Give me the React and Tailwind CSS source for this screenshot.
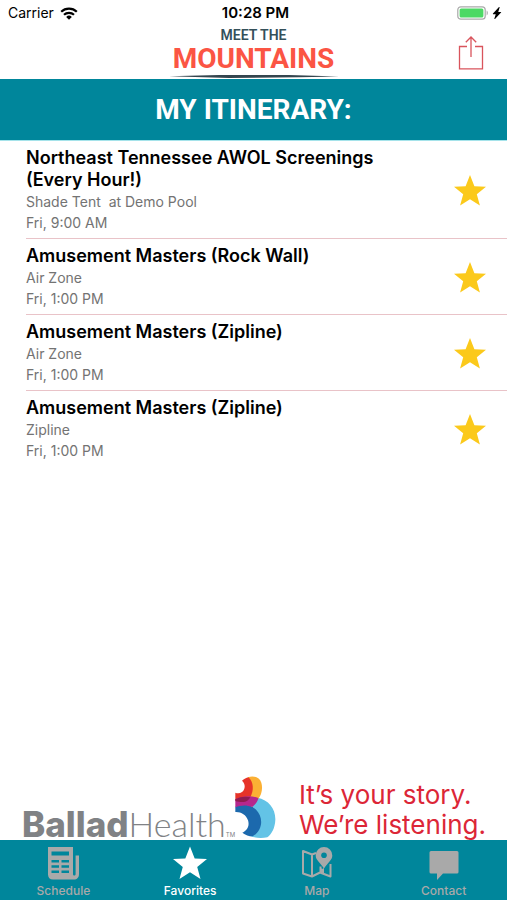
import React, { useState } from 'react'
import { BsLightningChargeFill } from 'react-icons/bs'

const EVENTS = [
  { id: 1, title: 'Northeast Tennessee AWOL Screenings (Every Hour!)', place: 'Shade Tent \u00a0at Demo Pool', time: 'Fri, 9:00 AM' },
  { id: 2, title: 'Amusement Masters (Rock Wall)', place: 'Air Zone', time: 'Fri, 1:00 PM' },
  { id: 3, title: 'Amusement Masters (Zipline)', place: 'Air Zone', time: 'Fri, 1:00 PM' },
  { id: 4, title: 'Amusement Masters (Zipline)', place: 'Zipline', time: 'Fri, 1:00 PM' },
]

const Star = ({ className }) => (
  <svg viewBox="0 0 32 31" className={className} fill="currentColor" aria-hidden="true">
    <path d="M16 0l4.400 11.200 11.600.600-9.200 7.400 3.100 11.400L16 24.300 6.100 30.600l3.100-11.400L0 11.800l11.600-.600z" />
  </svg>
)

const WifiIcon = () => (
  <svg viewBox="0 0 18 13" className="w-[18px] h-[13px]" fill="none" stroke="#000" strokeWidth="2.2" aria-hidden="true">
    <path d="M1.200 4.800a11.200 11.200 0 0 1 15.600 0" />
    <path d="M4 7.800a7.200 7.200 0 0 1 10 0" />
    <path d="M9 12.800L6.200 9.900a4 4 0 0 1 5.600 0z" fill="#000" stroke="none" />
  </svg>
)

const BatteryIcon = () => (
  <svg viewBox="0 0 32 14" className="w-8 h-[14px]" aria-hidden="true">
    <rect x=".8" y=".8" width="27.4" height="12.4" rx="3" fill="#fff" stroke="#a9a9a9" strokeWidth="1.2" />
    <rect x="2.6" y="2.4" width="23.8" height="9.2" rx="1.6" fill="#4cd964" />
    <path d="M29.600 4.600c1.600.600 1.600 4.200 0 4.800z" fill="#a9a9a9" />
  </svg>
)

const ShareIcon = () => (
  <svg viewBox="0 0 26 34" className="w-[26px] h-[34px]" fill="none" stroke="#d9545c" strokeWidth="1.3" aria-hidden="true">
    <path d="M9 10.500H1.500v22.300h23V10.500H17" />
    <path d="M13 21V1.200M7.800 6.200L13 1l5.200 5.200" />
  </svg>
)

const NewsIcon = () => (
  <svg viewBox="0 0 32 34" className="w-8 h-[34px]" aria-hidden="true">
    <path d="M1 1h25v27c0 2 2.600 2 2.600 0V9.500H32V28c0 3.600-2 5.500-5 5.500H6c-3.200 0-5-2-5-5z" fill="currentColor" />
    <path d="M4.500 5.500h17.500v4H4.500zM4.500 14h7.500v2.600H4.500zM14.500 14H22v2.600h-7.500zM4.500 19.200h7.500v2.600H4.500zM14.500 19.200H22v2.600h-7.500zM4.500 24.400h7.500V27H4.500zM14.500 24.400H22V27h-7.500z" fill="#00869b" />
  </svg>
)

const MapIcon = () => (
  <svg viewBox="0 0 32 34" className="w-8 h-[34px]" fill="none" stroke="currentColor" strokeWidth="2" strokeLinejoin="round" aria-hidden="true">
    <path d="M2 5l9 3.500v22L2 27.500zM11 8.500l4-1.500M11 30.500l8-4 10.500 4V18M19.500 26.500v-6" />
    <path d="M19 27v-6l2 2 2-1v5z" fill="currentColor" stroke="none" />
    <path d="M23 1a8.300 8.300 0 0 1 8.300 8.400c0 4.600-4.600 7.200-8.300 13-3.700-5.800-8.300-8.400-8.300-13A8.300 8.300 0 0 1 23 1z" fill="currentColor" stroke="none" />
    <circle cx="23" cy="9.200" r="2.8" fill="#00869b" stroke="none" />
  </svg>
)

const ContactIcon = () => (
  <svg viewBox="0 0 32 34" className="w-8 h-[34px]" fill="currentColor" aria-hidden="true">
    <path d="M3 5h26q1.500 0 1.500 1.500V26q0 1.500-1.500 1.500H15L9 34v-6.500H3q-1.500 0-1.500-1.500V6.500Q1.500 5 3 5z" />
  </svg>
)

const FavoritesIcon = () => <Star className="w-[34px] h-[34px]" />

const TABS = [
  { label: 'Schedule', Icon: NewsIcon },
  { label: 'Favorites', Icon: FavoritesIcon },
  { label: 'Map', Icon: MapIcon },
  { label: 'Contact', Icon: ContactIcon },
]

const BalladMark = () => (
  <svg viewBox="695 32 123 186" className="w-[41px] h-[62px]" aria-hidden="true">
    {/* light blue and yellow outer lobes */}
    <path d="M762 97c34 6 55 34 54 66-1 24-10 42-24 53-18 3-38 2-52-4 32-20 36-62 6-90z" fill="#63c3e6" />
    <path d="M733 36c20-7 36 1 41 16 5 17 1 36-10 50l-30-4c16-18 14-43-1-62z" fill="#fbb034" />
    {/* red and dark blue inner lobes */}
    <path d="M716 46c6-5 13-9 19-10 16 13 18 40 5 61-15-3-30-1-44 7V82c7 3 14 2 20-2 11-8 11-25 0-34z" fill="#e63329" />
    <path d="M696 124c20-9 46-7 61 8 26 26 20 64-9 81-11 0-22-4-31-11 16-7 22-22 17-37-6-17-21-26-38-25z" fill="#1c69ad" />
    {/* overlap */}
    <path d="M696 102c19-10 47-12 69-4-2 11-8 19-18 27-17-7-35-6-51 1z" fill="#b5278d" />
    <path d="M696 102c14-8 30-9 45-6-4 8-11 13-19 14-9 1-18-1-26-3z" fill="#8f1c50" />
  </svg>
)

const App = () => {
  const [removed, setRemoved] = useState([])
  const [activeTab, setActiveTab] = useState('Favorites')

  const toggle = (id) => {
    setRemoved(removed.includes(id) ? removed.filter((x) => x !== id) : [...removed, id])
  }

  return (
    <div className="min-h-screen flex flex-col bg-white text-black font-['Inter',sans-serif]">
      {/* Status bar */}
      <div className="grid grid-cols-[1fr_auto_1fr] items-center h-[26px] pl-2 pr-1 text-sm">
        <div className="flex items-center gap-1.5">
          <span>Carrier</span>
          <WifiIcon />
        </div>
        <div className="text-[15px] leading-5 font-semibold">10:28 PM</div>
        <div className="flex items-center justify-end gap-0.5">
          <BatteryIcon />
          <BsLightningChargeFill className="w-3 h-3" />
        </div>
      </div>

      {/* Header */}
      <header className="grid grid-cols-[1fr_auto_1fr] items-center h-[53px]">
        <div />
        <div className="flex flex-col items-center font-['Roboto',sans-serif]">
          <span className="text-sm leading-4 font-semibold text-[#34505a]">MEET THE</span>
          <span className="text-[28px] leading-8 font-bold text-[#fb5544]">MOUNTAINS</span>
          <svg viewBox="0 0 170 3" className="w-[170px] h-[3px]" aria-hidden="true">
            <path d="M0 1.200l50-1.100h70L170 1.500l-40 .800-70 .600z" fill="#34454e" />
          </svg>
        </div>
        <button type="button" aria-label="Share" className="justify-self-end mr-[23px]">
          <ShareIcon />
        </button>
      </header>

      <div className="flex items-center justify-center h-[62px] bg-[#00869b] border-b border-[#a5e3ea]">
        <h1 className="text-[28px] leading-8 font-bold text-white font-['Roboto',sans-serif]">MY ITINERARY:</h1>
      </div>

      {/* Saved events */}
      <main className="flex-1">
        <ul className="pl-[26px]">
          {EVENTS.map((event) => (
            <li key={event.id} className="flex items-center pt-1.5 pb-[5px] pr-[21px] border-b border-[#e9c3c8] last:border-b-0">
              <div className="flex-1 pr-16">
                <h2 className="text-lg leading-[22px] font-semibold">{event.title}</h2>
                <p className="text-sm leading-[21px] text-[#737373]">{event.place}</p>
                <p className="text-sm leading-[21px] text-[#737373]">{event.time}</p>
              </div>
              <button type="button" aria-label="Favorite" onClick={() => toggle(event.id)}>
                <Star className={removed.includes(event.id) ? 'w-8 h-[31px] text-gray-300' : 'w-8 h-[31px] text-[#fbc91b]'} />
              </button>
            </li>
          ))}
        </ul>
      </main>

      {/* Sponsor */}
      <a href="#sponsor" className="flex items-end justify-between pl-[22px] pr-[21px]">
        <div className="flex items-end text-[#808285]">
          <div className="flex items-baseline">
            <span className="text-[35px] leading-8 font-extrabold">Ballad</span>
            <span className="text-[34px] leading-8 font-light font-['Lato',sans-serif]">Health</span>
            <span className="text-[6px] leading-2">TM</span>
          </div>
          <div className="pb-0.5">
            <BalladMark />
          </div>
        </div>
        <p className="text-[26px] leading-[30px] text-[#dc2637]">
          It’s your story.
          <br />
          We’re listening.
        </p>
      </a>

      {/* Tab bar */}
      <nav className="grid grid-cols-4 h-[60px] bg-[#00869b]">
        {TABS.map(({ label, Icon }) => (
          <button
            key={label}
            type="button"
            onClick={() => setActiveTab(label)}
            className={
              activeTab === label
                ? 'flex flex-col items-center justify-end gap-1 pb-0.5 text-white'
                : 'flex flex-col items-center justify-end gap-1 pb-0.5 text-[#a9a9a9]'
            }
          >
            <Icon />
            <span className="text-xs leading-[14px] font-medium">{label}</span>
          </button>
        ))}
      </nav>
    </div>
  )
}

export default App
